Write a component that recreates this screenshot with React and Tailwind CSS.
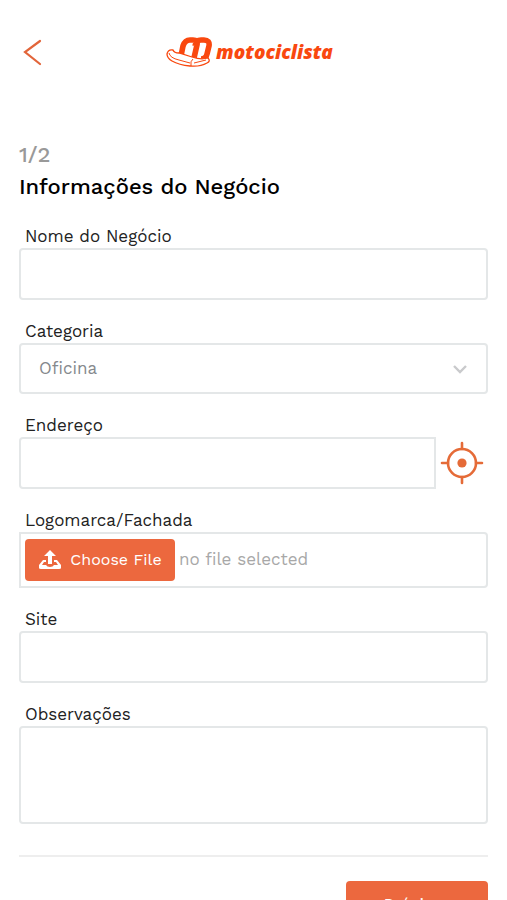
import { useState } from 'react';

const INPUT = 'block w-full rounded border-2 border-[#e4e7e8] bg-white px-4 text-base text-gray-700 outline-none focus:border-[#ec683e]';

function Logo() {
  return (
    <a href="#inicio" aria-label="motociclista" className="flex items-center gap-1 text-[#f9480f]">
      <svg viewBox="0 0 46 32" className="h-8 w-[46px]" fill="none">
        <path
          d="M15 20 17 10Q19 4 24 4H27Q32 4 31 9L28 22M29 10Q30 4 35 4H38Q44 4 43 10L41 18Q40 23 35 23"
          stroke="currentColor"
          strokeWidth="5.6"
        />
        <path
          d="M7 14Q2 13 1 18Q1 22 6 25Q13 29 24 30Q34 31 41 27Q45 25 42 22Q35 24 26 21L13 17Q8 17 7 14Z"
          fill="white"
          stroke="currentColor"
          strokeWidth="1.3"
        />
        <path d="M3 17Q4 22 13 24L24 27M27 23Q24 25 25 30M28 27 40 24" stroke="currentColor" strokeWidth="1" />
      </svg>
      <span className="font-['Open_Sans','Noto_Sans',sans-serif] text-[19px] leading-8 font-extrabold italic">motociclista</span>
    </a>
  );
}

function Field({ id, label, children }) {
  return (
    <div>
      <label htmlFor={id} className="block pl-1.5 text-[17px] leading-6 text-[#222]">
        {label}
      </label>
      {children}
    </div>
  );
}

function UploadIcon() {
  return (
    <svg viewBox="0 0 24 22" className="h-[22px] w-6" fill="currentColor">
      <path d="M12 1 18 7H14V15H10V7H6Z" />
      <path d="M5 11H8V13H6L4 16H8Q9 18 12 18T16 16H20L18 13H16V11H19L23 16V19Q23 20 21 20H3Q1 20 1 19V16Z" />
    </svg>
  );
}

export default function App() {
  const [fileName, setFileName] = useState('');

  return (
    <div className="min-h-screen bg-white px-[19px] pb-8 font-['Work_Sans',Inter,sans-serif]">
      <header className="grid grid-cols-[1fr_auto_1fr] items-center pt-9 pr-2">
        <button type="button" aria-label="Voltar" className="w-7 text-[#e2653a]">
          <svg viewBox="0 0 28 32" className="h-8 w-7" fill="none" stroke="currentColor" strokeWidth="2.2" strokeLinecap="round">
            <path d="M21 5 6 16 21 28" />
          </svg>
        </button>
        <Logo />
      </header>

      <main className="pt-[75px]">
        <p className="text-[22px] leading-6 font-medium text-[#999]">1/2</p>
        <h1 className="text-[22px] leading-10 font-medium text-black">Informações do Negócio</h1>

        <form className="pt-[17px]" onSubmit={(e) => e.preventDefault()}>
          <div className="flex flex-col gap-[19px]">
            <Field id="nome" label="Nome do Negócio">
              <input id="nome" type="text" className={`${INPUT} h-[52px]`} />
            </Field>

            <Field id="categoria" label="Categoria">
              <div className="grid items-center">
                <select
                  id="categoria"
                  className="col-start-1 row-start-1 h-[51px] w-full appearance-none rounded border-2 border-[#e4e7e8] bg-white px-[18px] text-[17px] text-[#85898d] outline-none"
                >
                  <option>Oficina</option>
                </select>
                <svg
                  viewBox="0 0 16 16"
                  className="pointer-events-none col-start-1 row-start-1 mr-5 size-4 justify-self-end text-[#c9cacc]"
                  fill="none"
                  stroke="currentColor"
                  strokeWidth="2.4"
                >
                  <path d="M2 5 8 11 14 5" />
                </svg>
              </div>
            </Field>

            <Field id="endereco" label="Endereço">
              <div className="flex items-center gap-1">
                <input id="endereco" type="text" className={`${INPUT} h-[52px] min-w-0 flex-1 rounded-r-none`} />
                <button type="button" aria-label="Usar minha localização" className="mr-1 text-[#e56b38]">
                  <svg viewBox="0 0 44 44" className="size-11" fill="none" stroke="currentColor" strokeWidth="2.6">
                    <circle cx="22" cy="22" r="14" />
                    <circle cx="22" cy="22" r="4.6" fill="currentColor" stroke="none" />
                    <path d="M22 2V8M22 36V42M2 22H8M36 22H42" strokeLinecap="round" />
                  </svg>
                </button>
              </div>
            </Field>

            <Field id="logomarca" label="Logomarca/Fachada">
              <label
                htmlFor="logomarca"
                className="relative flex h-14 cursor-pointer items-center gap-1 rounded-r border-2 border-[#e4e7e8] px-1"
              >
                <input
                  id="logomarca"
                  type="file"
                  className="sr-only"
                  onChange={(e) => setFileName(e.target.files[0]?.name ?? '')}
                />
                <span className="flex h-[42px] w-[150px] items-center justify-center gap-2 rounded bg-[#ec683e] text-base text-white">
                  <UploadIcon />
                  Choose File
                </span>
                <span className="text-[17px] text-[#a8a8a8]">{fileName || 'no file selected'}</span>
              </label>
            </Field>

            <Field id="site" label="Site">
              <input id="site" type="text" className={`${INPUT} h-[52px]`} />
            </Field>

            <Field id="observacoes" label="Observações">
              <textarea id="observacoes" className={`${INPUT} h-[98px] resize-none py-3`} />
            </Field>
          </div>

          <div className="mt-[31px] flex justify-end border-t-2 border-[#eee] pt-6">
            <button type="submit" className="h-[50px] w-[142px] rounded bg-[#ec683e] text-[17px] text-white">
              Próximo
            </button>
          </div>
        </form>
      </main>
    </div>
  );
}
